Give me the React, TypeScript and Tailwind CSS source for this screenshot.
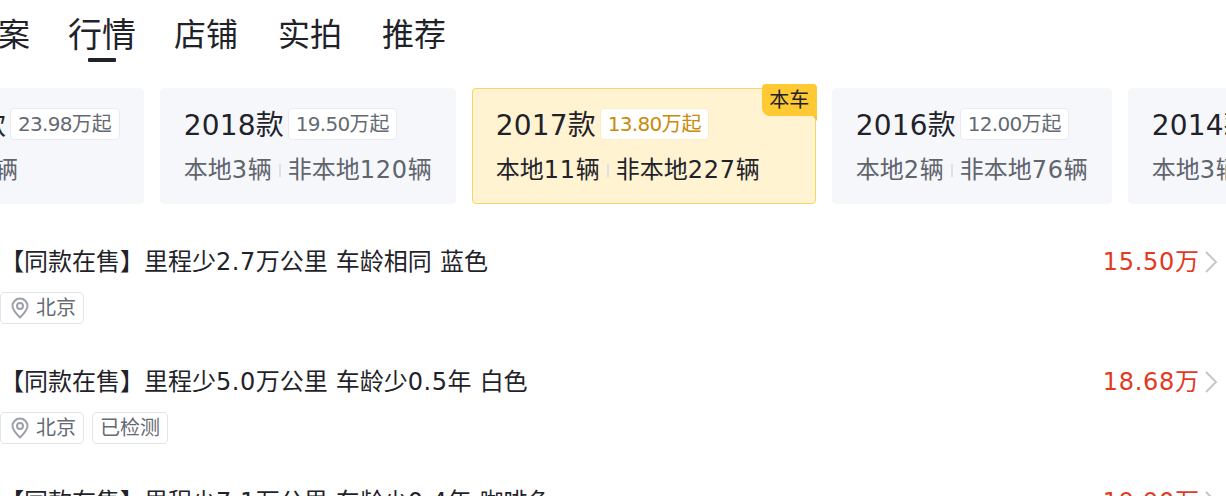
const fontStack = '[font-family:"DejaVu_Sans","Noto_Sans_CJK_SC",sans-serif]';

// digits in the reference sit on whole-pixel advances, so nudge each latin run
function Txt({ text, tracking }: { text: string; tracking: string }) {
  return (
    <>
      {text.split(/([0-9. ]+)/).map((part, i) =>
        i % 2 === 1 ? (
          <span key={i} className={tracking}>
            {part}
          </span>
        ) : (
          part
        )
      )}
    </>
  );
}

function PinIcon() {
  return (
    <svg width="20" height="24" viewBox="0 0 20 24" fill="none" stroke="#9ba1ab" strokeWidth="2" className="shrink-0">
      <path d="M10 21.5 C6 17.5 2.5 14.2 2.5 10 a7.5 7.5 0 0 1 15 0 C17.5 14.2 14 17.5 10 21.5 Z" strokeLinejoin="round" />
      <circle cx="10" cy="10" r="3" />
    </svg>
  );
}

function Chevron() {
  return (
    <svg width="14" height="24" viewBox="0 0 14 24" fill="none" stroke="#c6c8cc" strokeWidth="2" className="ml-[5px]">
      <path d="M2 2 L12 12 L2 22" />
    </svg>
  );
}

interface YearCard {
  year: string;
  price: string;
  local?: string;
  other: string;
  active?: boolean;
}

const cards: YearCard[] = [
  { year: "2019款", price: "23.98万起", other: "非本地3辆" },
  { year: "2018款", price: "19.50万起", local: "本地3辆", other: "非本地120辆" },
  { year: "2017款", price: "13.80万起", local: "本地11辆", other: "非本地227辆", active: true },
  { year: "2016款", price: "12.00万起", local: "本地2辆", other: "非本地76辆" },
  { year: "2014款", price: "9.80万起", local: "本地3辆", other: "非本地58辆" },
];

const rows = [
  { title: "【同款在售】里程少2.7万公里 车龄相同 蓝色", price: "15.50万", tags: [] as string[] },
  { title: "【同款在售】里程少5.0万公里 车龄少0.5年 白色", price: "18.68万", tags: ["已检测"] },
  { title: "【同款在售】里程少7.1万公里 车龄少0.4年 咖啡色", price: "19.90万", tags: [] as string[] },
];

function Card({ card }: { card: YearCard }) {
  return (
    <div
      className={`relative shrink-0 h-[116px] rounded-[4px] border pl-[23px] pt-[15px] ${
        card.active ? "pr-[55px] bg-[#fff3d2] border-[#f5d565]" : "pr-[23px] bg-[#f5f7fb] border-[#f5f7fb]"
      }`}
    >
      {card.active && (
        <>
          <span className="absolute -top-[5px] -right-[2px] h-[32px] w-[55px] flex items-center justify-center rounded-t-[4px] rounded-bl-[8px] bg-[#ffc933] text-[20px] text-[#1f2329]">
            本车
          </span>
          <svg width="4" height="5" viewBox="0 0 4 5" className="absolute top-[27px] -right-[2px]">
            <path d="M0 0 H4 V5 Z" fill="#f0c040" />
          </svg>
        </>
      )}
      <div className="flex items-center h-[40px]">
        <span className="text-[28px] text-[#1f2329] mt-[3px]">
          <Txt text={card.year} tracking="tracking-[0.19px]" />
        </span>
        <span
          className={`ml-[4px] h-[32px] px-[7px] flex items-center rounded-[4px] border text-[20px] bg-white ${
            card.active ? "border-[#fbeec4] text-[#c98a09]" : "border-[#e8eaef] text-[#646a73]"
          }`}
        >
          <span>
            <Txt text={card.price} tracking="tracking-[-0.72px]" />
          </span>
        </span>
      </div>
      <div className={`flex items-center h-[36px] mt-[8px] text-[24px] ${card.active ? "text-[#1f2329]" : "text-[#5f646d]"}`}>
        {card.local && (
          <>
            <span>
              <Txt text={card.local} tracking="tracking-[0.73px]" />
            </span>
            <span className="mx-[7px] w-[2px] h-[13px] bg-[#dfe1e5]" />
          </>
        )}
        <span>
          <Txt text={card.other} tracking="tracking-[0.73px]" />
        </span>
      </div>
    </div>
  );
}

export default function App() {
  return (
    <div className={`w-[1226px] h-[496px] overflow-hidden bg-white ${fontStack}`}>
      <div className="flex items-center gap-[40px] -ml-[2px] h-[88px] pb-[18px] text-[32px] leading-[44px] text-[#1f2329]">
        <span>案</span>
        <span className="relative -mx-[2px] text-[34px]">
          行情
          <span className="absolute left-[20px] top-[45px] w-[28px] h-[4px] rounded-[1px] bg-[#1f2329]" />
        </span>
        <span>店铺</span>
        <span>实拍</span>
        <span>推荐</span>
      </div>

      <div className="flex gap-[16px] -ml-[118px]">
        {cards.map((card) => (
          <Card key={card.year} card={card} />
        ))}
      </div>

      <div className="pr-[8px] pt-[38px]">
        {rows.map((row) => (
          <div key={row.title} className="h-[120px]">
            <div className="flex items-center justify-between h-[40px]">
              <span className="text-[24px] text-[#1f2329] whitespace-pre">
                <Txt text={row.title} tracking="tracking-[0.5px]" />
              </span>
              <span className="flex items-center text-[24px] text-[#e2391f]">
                <span>
                  <Txt text={row.price} tracking="tracking-[0.73px]" />
                </span>
                <Chevron />
              </span>
            </div>
            <div className="flex gap-[8px] mt-[10px]">
              <span className="flex items-center gap-[6px] h-[32px] pl-[9px] pr-[7px] rounded-[4px] border border-[#e4e5e8] text-[20px] text-[#646a73]">
                <PinIcon />
                北京
              </span>
              {row.tags.map((tag) => (
                <span key={tag} className="flex items-center h-[32px] px-[7px] rounded-[4px] border border-[#e4e5e8] text-[20px] text-[#646a73]">
                  {tag}
                </span>
              ))}
            </div>
          </div>
        ))}
      </div>
    </div>
  );
}
